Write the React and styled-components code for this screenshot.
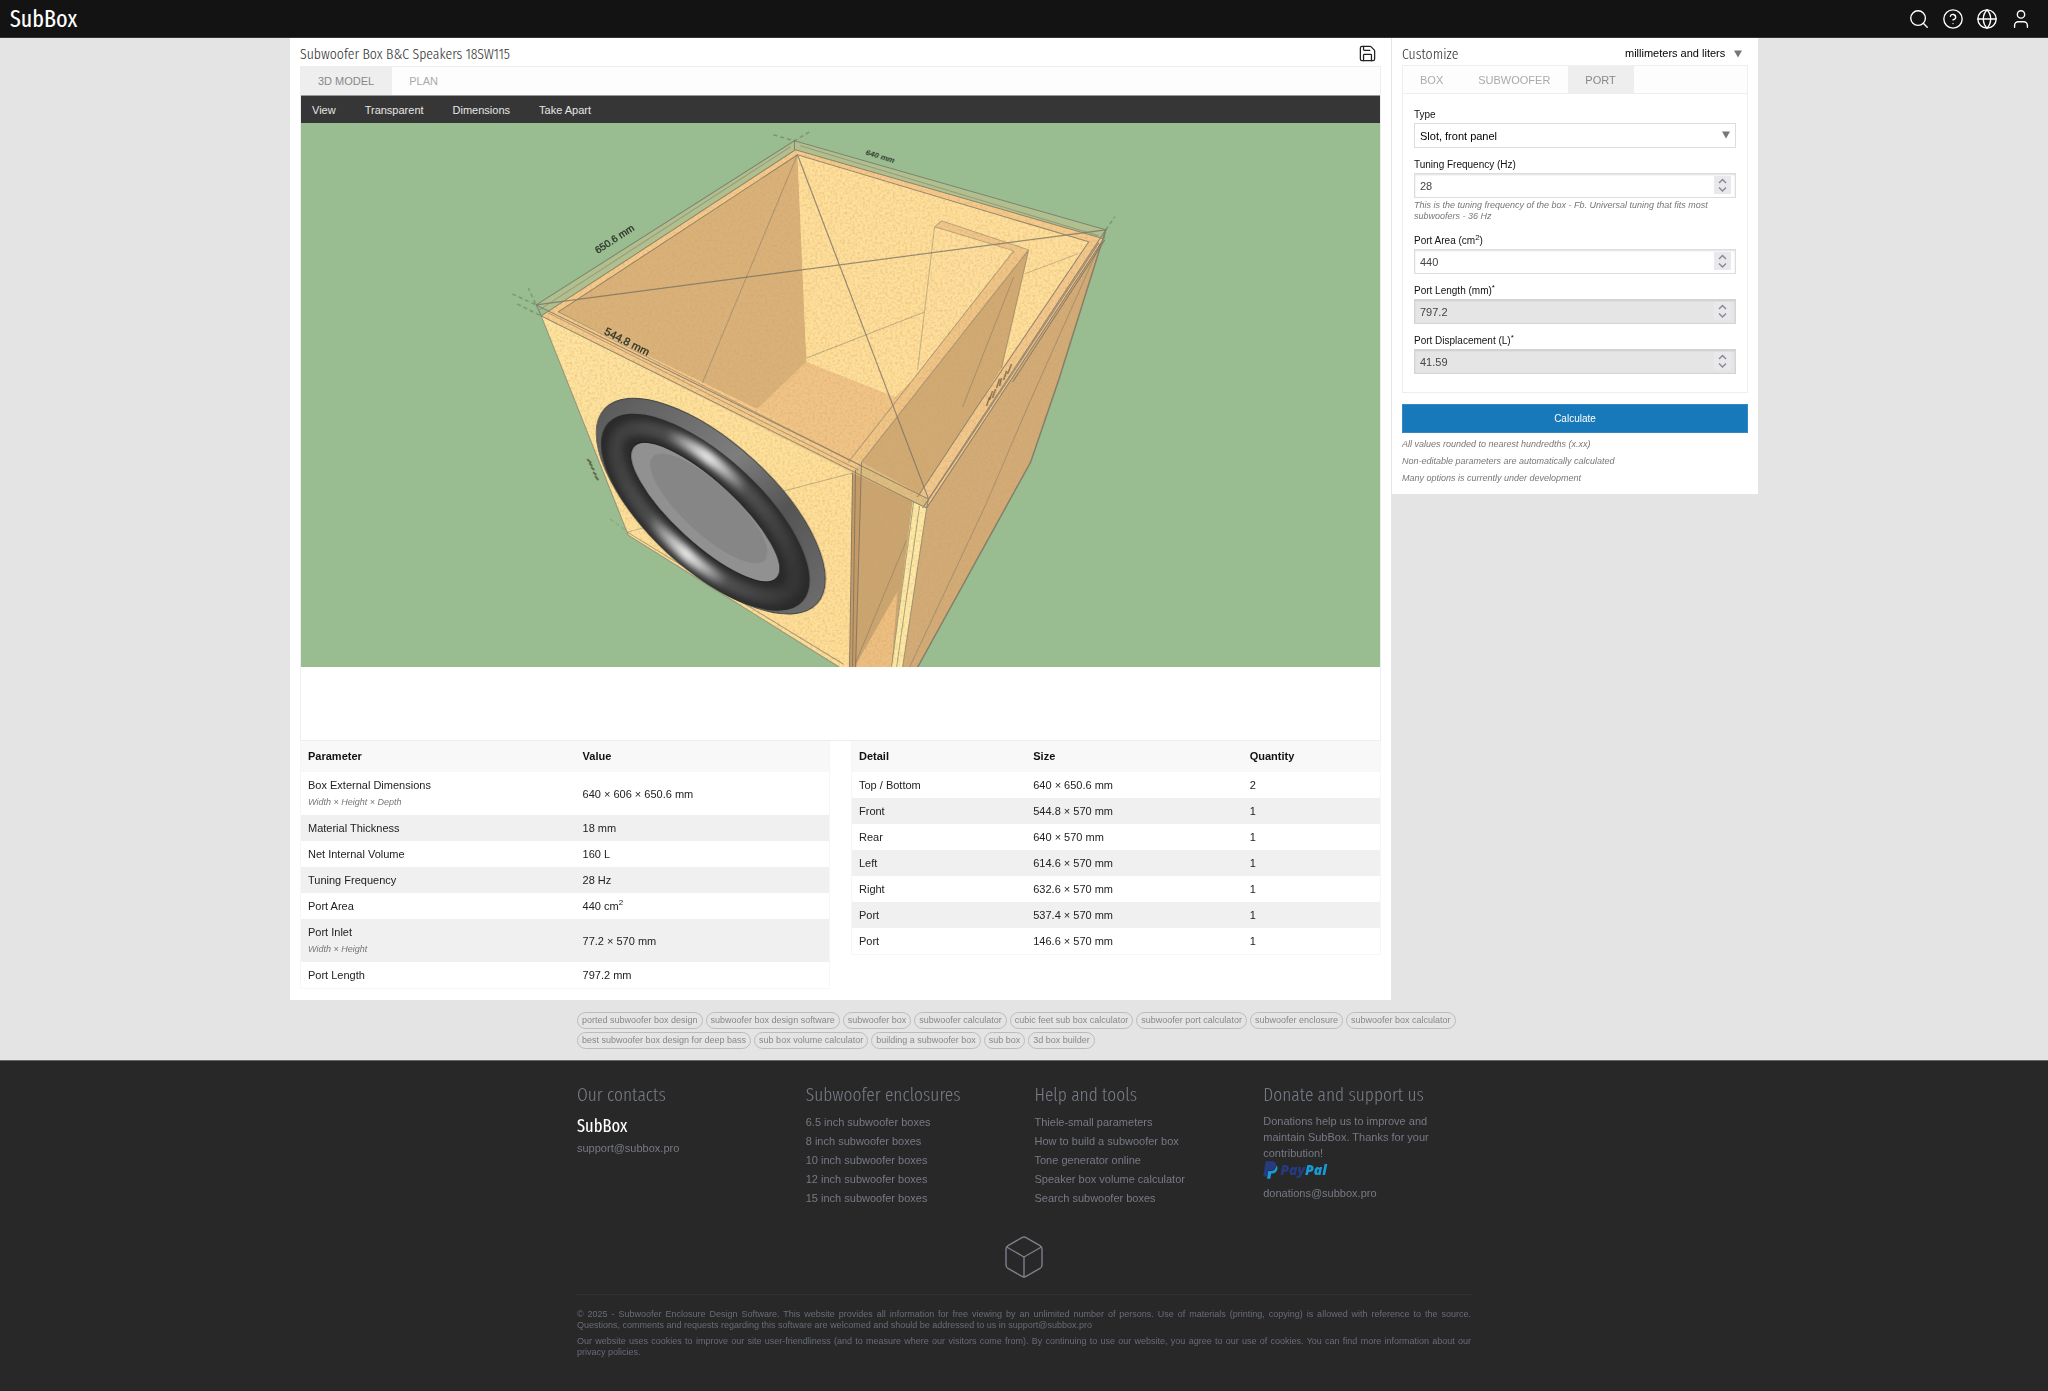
import React from 'react';

import styled, {createGlobalStyle, css} from 'styled-components';
import {Box, CircleHelp, Globe, Save, Search, User} from 'lucide-react';

const GlobalStyle = createGlobalStyle`
  * {
    box-sizing: border-box;
  }

  body {
    margin: 0;
    background: #e4e4e4;
    color: #222;
    font-family: 'Liberation Sans', Arial, sans-serif;
    font-size: 11px;
    line-height: 16px;
  }

  button,
  input,
  select {
    font-family: inherit;
    font-size: inherit;
    margin: 0;
  }

  sup {
    font-size: 8px;
    line-height: 0;
  }
`;

const condensed = css`
  font-family: 'Fira Sans Extra Condensed', 'Fira Sans Condensed', 'Open Sans Condensed', 'Roboto Condensed', Lato,
    sans-serif;
  font-weight: 300;
`;

const Page = styled.div`
  display: flex;
  flex-direction: column;
  min-height: 100vh;
`;

const Header = styled.header`
  display: flex;
  align-items: center;
  justify-content: space-between;
  height: 38px;
  padding: 0 16px 0 10px;
  background: #131313;
  border-bottom: 1px solid #333;
`;

const Logo = styled.a`
  ${condensed}
  display: block;
  color: #fff;
  font-size: ${(props) => (props.$small ? '18px' : '24px')};
  font-weight: 400;
  line-height: ${(props) => (props.$small ? '26px' : '30px')};
  text-decoration: none;
`;

const HeaderNav = styled.nav`
  display: flex;
  gap: 12px;
`;

const IconButton = styled.button`
  display: flex;
  padding: 0 ${(props) => props.$inset ?? '0'} 0 0;
  border: none;
  background: none;
  color: ${(props) => props.$color ?? '#fff'};
  cursor: pointer;
`;

const Workspace = styled.main`
  display: grid;
  grid-template-columns: 3fr 1fr;
  align-items: start;
  width: 100%;
  max-width: 1468px;
  margin: 0 auto;
`;

const Panel = styled.section`
  background: #fff;
  padding: 0 10px ${(props) => props.$bottom ?? '11px'};
`;

const SidePanel = styled(Panel)`
  border-left: 1px solid #e4e4e4;
`;

const PanelHead = styled.div`
  display: flex;
  align-items: center;
  justify-content: space-between;
  height: ${(props) => props.$height ?? '28px'};
  padding-top: 2px;
`;

const Title = styled.h1`
  ${condensed}
  margin: 2px 0 0;
  color: #333;
  font-size: 15px;
`;

const Framed = styled.div`
  border: 1px solid #eee;
`;

const Tabs = styled.div`
  display: flex;
  height: ${(props) => props.$height ?? '28px'};
  background: #fdfdfd;
  border-bottom: 1px solid ${(props) => props.$line ?? '#eee'};
`;

const Tab = styled.button`
  padding: 0 18px 0 17px;
  border: none;
  background: ${(props) => (props.$active ? '#eee' : 'transparent')};
  color: ${(props) => (props.$active ? '#888' : '#aaa')};
  text-transform: uppercase;
  cursor: pointer;
`;

const Toolbar = styled.div`
  display: flex;
  gap: 29px;
  height: 27px;
  padding: 0 11px;
  background: #363636;
`;

const ToolButton = styled.button`
  padding: 0;
  border: none;
  background: none;
  color: #e6e6e6;
  cursor: pointer;
`;

const Scene = styled.svg`
  display: block;
  width: 100%;
  height: 544px;
  background: #9abc91;
`;

const SceneFooter = styled.div`
  height: 73px;
`;

const Tables = styled.div`
  display: grid;
  grid-template-columns: 1fr 1fr;
  gap: 21px;
  align-items: start;
`;

const DataTable = styled.table`
  width: 100%;
  border: 1px solid #f6f6f6;
  border-top: none;
  border-spacing: 0;
  table-layout: fixed;

  th,
  td {
    padding: 5px 7px;
    text-align: left;
  }

  th {
    padding: 7px 7px 8px;
    background: #f8f8f8;
    color: #111;
  }

  tbody tr:nth-child(even) {
    background: #f0f0f0;
  }
`;

const Hint = styled.p`
  margin: ${(props) => props.$margin ?? '0'};
  color: #777;
  font-size: 9px;
  font-style: italic;
  line-height: ${(props) => props.$lineHeight ?? '11px'};
`;

const Form = styled.form`
  display: flex;
  flex-direction: column;
  padding: 12px 11px 10px;
`;

const FieldBlock = styled.div`
  margin-bottom: ${(props) => (props.$loose ? '10px' : '8px')};
`;

const Label = styled.label`
  display: block;
  color: #111;
  font-size: 10px;
  line-height: 17px;
`;

const Control = styled.div`
  position: relative;
  display: flex;
`;

const control = css`
  width: 100%;
  height: 25px;
  padding: 0 5px;
  border: 1px solid #ddd;
  border-radius: 0;
  background: #fff;
  outline: none;
`;

const NumberInput = styled.input`
  ${control}
  color: #444;
  box-shadow: inset 0 1px 2px #ddd;
  appearance: textfield;

  &::-webkit-inner-spin-button {
    appearance: none;
  }

  &:read-only {
    background: #e5e5e5;
    border-color: #d4d4d4;
    box-shadow: inset 0 1px 2px #ccc;
  }
`;

const Select = styled.select`
  ${control}
  appearance: none;
  color: #000;
`;

const UnitSelect = styled.select`
  appearance: none;
  padding: 0 22px 0 0;
  border: none;
  background: none;
  color: #000;
`;

const Arrow = styled.svg`
  position: absolute;
  top: ${(props) => props.$top};
  right: 6px;
  pointer-events: none;
`;

const Spinner = styled.svg`
  position: absolute;
  top: 3px;
  right: 5px;
  background: #e9e9ed;
`;

const Submit = styled.button`
  width: 100%;
  height: 29px;
  margin: 11px 0 3px;
  border: 1px solid #3488c4;
  background: #1779ba;
  color: #fff;
  font-size: 10px;
  cursor: pointer;
`;

const Narrow = styled.div`
  width: 100%;
  max-width: 894px;
  margin: 0 auto;
`;

const TagList = styled(Narrow)`
  display: flex;
  flex-wrap: wrap;
  gap: 3px;
  padding: 12px 0 11px;
`;

const Tag = styled.a`
  height: 17px;
  padding: 0 4px;
  border: 1px solid #bbb;
  border-radius: 9px;
  color: #888;
  font-size: 9px;
  line-height: 15px;
  text-decoration: none;
`;

const Footer = styled.footer`
  flex: 1;
  border-top: 1px solid #666;
  background: #282828;
  color: #777a85;
`;

const FooterColumns = styled(Narrow)`
  display: grid;
  grid-template-columns: repeat(4, 1fr);
  column-gap: 21px;
  height: 172px;
  padding-top: 20px;
`;

const FooterTitle = styled.h2`
  ${condensed}
  margin: 0 0 4px;
  font-size: 19px;
  line-height: 28px;
`;

const FooterLink = styled.a`
  display: block;
  color: inherit;
  line-height: 19px;
  text-decoration: none;
`;

const FooterText = styled.p`
  margin: 2px 0 0;
`;

const PayPalLink = styled.a`
  display: flex;
  align-items: center;
  gap: 2px;
  height: 19px;
  margin: -1px 0 5px;
  color: #253b80;
  font-family: 'Open Sans', sans-serif;
  font-size: 14px;
  font-style: italic;
  font-weight: 800;
  text-decoration: none;
`;

const PayPalAccent = styled.span`
  color: #179bd7;
`;

const FooterMark = styled.div`
  display: flex;
  justify-content: center;
  height: 62px;
  border-bottom: 1px solid #323232;
`;

const Legal = styled(Narrow)`
  padding-bottom: 30px;
  color: #696c78;
  font-size: 9px;
  line-height: 11px;
  text-align: justify;
`;

const LegalText = styled.p`
  margin: 0 0 5px;
`;

const LegalBody = styled.div`
  padding-top: 14px;
`;

const parameters = [
  {name: 'Box External Dimensions', note: 'Width × Height × Depth', value: '640 × 606 × 650.6 mm'},
  {name: 'Material Thickness', value: '18 mm'},
  {name: 'Net Internal Volume', value: '160 L'},
  {name: 'Tuning Frequency', value: '28 Hz'},
  {name: 'Port Area', value: <>440 cm<sup>2</sup></>},
  {name: 'Port Inlet', note: 'Width × Height', value: '77.2 × 570 mm'},
  {name: 'Port Length', value: '797.2 mm'},
];

const details = [
  ['Top / Bottom', '640 × 650.6 mm', 2],
  ['Front', '544.8 × 570 mm', 1],
  ['Rear', '640 × 570 mm', 1],
  ['Left', '614.6 × 570 mm', 1],
  ['Right', '632.6 × 570 mm', 1],
  ['Port', '537.4 × 570 mm', 1],
  ['Port', '146.6 × 570 mm', 1],
];

const tags = [
  'ported subwoofer box design',
  'subwoofer box design software',
  'subwoofer box',
  'subwoofer calculator',
  'cubic feet sub box calculator',
  'subwoofer port calculator',
  'subwoofer enclosure',
  'subwoofer box calculator',
  'best subwoofer box design for deep bass',
  'sub box volume calculator',
  'building a subwoofer box',
  'sub box',
  '3d box builder',
];

const enclosures = ['6.5', '8', '10', '12', '15'].map((size) => `${size} inch subwoofer boxes`);

const tools = [
  'Thiele-small parameters',
  'How to build a subwoofer box',
  'Tone generator online',
  'Speaker box volume calculator',
  'Search subwoofer boxes',
];

const DropArrow = ({top}) => (
  <Arrow $top={top} width="8" height="8" viewBox="0 0 8 8" aria-hidden="true">
    <path d="M0 0.5h8L4 7.5z" fill="#777" />
  </Arrow>
);

const NumberField = ({id, label, value, readOnly, hint}) => (
  <FieldBlock $loose={Boolean(hint)}>
    <Label htmlFor={id}>{label}</Label>
    <Control>
      <NumberInput id={id} type="number" step="any" defaultValue={value} readOnly={readOnly} />
      <Spinner width="17" height="18" viewBox="0 0 17 18" aria-hidden="true">
        <path d="M5 7l3.5-3.5L12 7M5 11.5L8.5 15 12 11.5" fill="none" stroke="#8b8b94" strokeWidth="1.5" />
      </Spinner>
    </Control>
    {hint && <Hint $margin="2px 0 0">{hint}</Hint>}
  </FieldBlock>
);

const Speaker = () => (
  <g>
    <ellipse rx="144" ry="63" transform="translate(710.5 506) rotate(42.5)" fill="url(#rim)" stroke="#444" strokeWidth="1" />
    <g transform="translate(705 512) rotate(42.6)">
      <ellipse rx="132" ry="56" fill="#2b2b2b" />
      <ellipse rx="115" ry="44" fill="none" stroke="url(#roll)" strokeWidth="15" filter="url(#soft)" />
      <ellipse rx="116" ry="44" fill="none" stroke="url(#glow)" strokeWidth="7" filter="url(#soft)" />
      <ellipse rx="97" ry="31" fill="#919191" stroke="#222" strokeWidth="1" />
      <ellipse cx="0" cy="-5" rx="76" ry="25" fill="#868686" />
    </g>
  </g>
);

const BoxScene = () => (
  <Scene viewBox="301 123 1078 544" preserveAspectRatio="xMidYMid slice" role="img" aria-label="3D model">
    <defs>
      <filter id="grain" x="0" y="0" width="100%" height="100%">
        <feTurbulence type="fractalNoise" baseFrequency="0.4" numOctaves="3" seed="4" />
        <feColorMatrix values="0 0 0 0 0.56  0 0 0 0 0.34  0 0 0 0 0.14  0.9 0 0 0 -0.36" />
        <feComposite in2="SourceGraphic" operator="in" result="noise" />
        <feMerge>
          <feMergeNode in="SourceGraphic" />
          <feMergeNode in="noise" />
        </feMerge>
      </filter>
      <filter id="soft" x="-20%" y="-40%" width="140%" height="180%">
        <feGaussianBlur stdDeviation="3" />
      </filter>
      <linearGradient id="front" x1="0" y1="0" x2="1" y2="1">
        <stop offset="0" stopColor="#ffe49f" />
        <stop offset="1" stopColor="#ffde96" />
      </linearGradient>
      <linearGradient id="rim" x1="0" y1="0" x2="1" y2="0">
        <stop offset="0" stopColor="#5c5c5c" />
        <stop offset="0.45" stopColor="#7e7e7e" />
        <stop offset="0.7" stopColor="#555" />
        <stop offset="1" stopColor="#6c6c6c" />
      </linearGradient>
      <linearGradient id="roll" gradientUnits="userSpaceOnUse" x1="-105" y1="58" x2="85" y2="-54">
        <stop offset="0" stopColor="#3a3a3a" />
        <stop offset="0.3" stopColor="#4c4c4c" />
        <stop offset="0.5" stopColor="#aaa" />
        <stop offset="0.7" stopColor="#505050" />
        <stop offset="1" stopColor="#353535" />
      </linearGradient>
      <linearGradient id="glow" gradientUnits="userSpaceOnUse" x1="-105" y1="58" x2="85" y2="-54">
        <stop offset="0.3" stopColor="#fff" stopOpacity="0" />
        <stop offset="0.5" stopColor="#fff" stopOpacity="0.9" />
        <stop offset="0.7" stopColor="#fff" stopOpacity="0" />
      </linearGradient>
    </defs>

    {/* see-through top sheet over the background */}
    <path d="M794 141L1105 230 1103 240 928 499 536 305z" fill="#b0bf8d" />

    <g filter="url(#grain)">
      <path d="M795 150L1103 239 926 508 852 473 541 316z" fill="#f6ca8a" />
      <path d="M797 155L806 362 757 409 558 312z" fill="#dab279" />
      <path d="M797 155L1088 242 1001 368 894 397 806 362z" fill="#ffdf9a" />
      <path d="M806 362L894 397 912 380 848 462 757 409z" fill="#f1c486" />
      <path d="M934 227L1013 251 912 380 917 370z" fill="#ffdf9b" />
      <path d="M934 227L941 221 1028 250 1013 251z" fill="#f1c68a" />
      <path d="M1028 250L1001 368 975 409 917 497 861 462z" fill="#d1aa73" />
      <path d="M1013 251L1028 250 861 462 848 462z" fill="#f0c586" />
      <path d="M1088 242L1103 239 926 508 917 497 975 409z" fill="#f3c88c" />
      <path d="M1103 239L1105 232 1058 380 1030 462 917 667 902 667 926 508z" fill="#d2ab77" />
      <path d="M861 462L917 497 912 502 891 667 852 667z" fill="#cba56f" />
      <path d="M897 591L891 667 854 667z" fill="#edbf80" />
      <path d="M912 502L926 508 902 667 891 667z" fill="#ffeaa5" />
      <path d="M541 316L852 473 849 667 839 667 628 535z" fill="url(#front)" />
      <path d="M852 473L861 464 856 667 849 667z" fill="#c69a66" />
      <path d="M852 473L861 462 928 499 926 508z" fill="#dfbd80" />
    </g>

    <g fill="none" stroke="#6e6a60" strokeWidth="1" opacity="0.7">
      <path d="M536 305L794 141 1105 230 928 499z" />
      <path d="M541 316L795 150 1103 239 926 508z" />
      <path d="M539 310L790 147M800 146L1098 236" opacity="0.6" />
      <path d="M558 312L797 155 1088 242 975 409 917 497" />
      <path d="M536 305L541 316M794 141V150M1105 230L1103 239M928 499L926 508" />
      <path d="M558 312L861 466M548 313L858 470" opacity="0.7" />
      <path d="M536 305L1105 230M797 155L928 499" strokeWidth="1.2" />
      <path d="M934 227L941 221 1028 250M934 227L1013 251" opacity="0.6" />
      <path d="M1013 251L848 462M1028 250L861 462M1028 250L1001 368" opacity="0.7" />
      <path d="M1098 243L960 452 922 508M1104 240L1012 382" />
      <path d="M1105 230L1058 380 1030 462 917 667" strokeWidth="1.5" />
      <path d="M926 508L902 667M913 502L891 667M919 506L896 667" opacity="0.8" />
      <path d="M852 473L849 667M855 470L852 667M861 462L855 667" />
      <path d="M541 316L628 535 839 667M627 532L843 664" opacity="0.8" />
    </g>

    <g fill="none" stroke="#6e6a60" strokeWidth="1" opacity="0.4">
      <path d="M797 155L702 383M806 358L924 312M934 227L917 370M1024 274L1077 254" />
      <path d="M1013 277L962 407M1100 243L1026 409 984 507 909 667M906 540L855 663" />
      <path d="M852 473L627 532" />
    </g>

    <g fill="none" stroke="#4c5c48" strokeWidth="1" strokeDasharray="4 3" opacity="0.6">
      <path d="M773 135L794 141 809 132M512 294L536 305 528 288M517 304L541 316M1105 230L1114 217" />
      <path d="M610 519L628 532" opacity="0.4" />
    </g>

    <Speaker />

    <g fill="#2b3328" textAnchor="middle">
      <text fontSize="8" fontStyle="italic" fontWeight="700" transform="translate(879 159) rotate(17)">640 mm</text>
      <text fontSize="10" transform="translate(616 242) rotate(-33)" stroke="#2b3328" strokeWidth="0.3">650.6 mm</text>
      <text fontSize="11" transform="translate(625 345) rotate(27)" stroke="#2b3328" strokeWidth="0.3">544.8 mm</text>
    </g>
    <g fill="none" stroke="#3a3326" opacity="0.65">
      <path d="M986 406l3-9M989 400l3-9M992 398l3-9M996 388l3-9M999 386l2-8M1003 380l3-9M1007 374l4-10" strokeWidth="1.3" />
      <path d="M587 459l4 4M589 463l3 3M591 467l3 3M593 472l3 3M595 476l3 4" strokeWidth="1.8" />
    </g>
  </Scene>
);

const PayPalMark = () => (
  <svg width="15" height="18" viewBox="0 0 15 18" aria-hidden="true">
    <path d="M2.6 0.3h6.2c3 0 4.700 1.600 4.200 4.300-.6 3.200-2.800 4.700-6 4.700H5.200L4.100 15.500H0.300z" fill="#253b80" />
    <path d="M13.400 4.400c1 .9 1.300 2.200.9 3.900-.7 2.900-2.500 4.200-5.300 4.200H8.200l-.9 5.200H4l1.300-7.700h2.400c3.100 0 5-1.900 5.700-5.600z" fill="#179bd7" />
  </svg>
);

const App = () => (
  <Page>
    <GlobalStyle />
    <Header>
      <Logo href="#">SubBox</Logo>
      <HeaderNav>
        <IconButton aria-label="Search"><Search size={22} strokeWidth={1.5} /></IconButton>
        <IconButton aria-label="Help"><CircleHelp size={22} strokeWidth={1.5} /></IconButton>
        <IconButton aria-label="Language"><Globe size={22} strokeWidth={1.5} /></IconButton>
        <IconButton aria-label="Account"><User size={22} strokeWidth={1.5} /></IconButton>
      </HeaderNav>
    </Header>

    <Workspace>
      <Panel>
        <PanelHead>
          <Title>Subwoofer Box B&amp;C Speakers 18SW115</Title>
          <IconButton $color="#222" $inset="4px" aria-label="Save"><Save size={19} strokeWidth={1.6} /></IconButton>
        </PanelHead>
        <Framed>
          <Tabs $line="#999" $height="29px">
            <Tab $active>3D Model</Tab>
            <Tab>Plan</Tab>
          </Tabs>
          <Toolbar>
            {['View', 'Transparent', 'Dimensions', 'Take Apart'].map((item) => (
              <ToolButton key={item}>{item}</ToolButton>
            ))}
          </Toolbar>
          <BoxScene />
          <SceneFooter />
        </Framed>
        <Tables>
          <DataTable>
            <colgroup>
              <col width="52%" />
              <col />
            </colgroup>
            <thead>
              <tr>
                <th>Parameter</th>
                <th>Value</th>
              </tr>
            </thead>
            <tbody>
              {parameters.map((row) => (
                <tr key={row.name}>
                  <td>
                    {row.name}
                    {row.note && <Hint $margin="2px 0 0" $lineHeight="15px">{row.note}</Hint>}
                  </td>
                  <td>{row.value}</td>
                </tr>
              ))}
            </tbody>
          </DataTable>
          <DataTable>
            <colgroup>
              <col width="33%" />
              <col width="41%" />
              <col />
            </colgroup>
            <thead>
              <tr>
                <th>Detail</th>
                <th>Size</th>
                <th>Quantity</th>
              </tr>
            </thead>
            <tbody>
              {details.map(([name, size, quantity]) => (
                <tr key={size}>
                  <td>{name}</td>
                  <td>{size}</td>
                  <td>{quantity}</td>
                </tr>
              ))}
            </tbody>
          </DataTable>
        </Tables>
      </Panel>

      <SidePanel $bottom="7px">
        <PanelHead $height="27px">
          <Title as="h2">Customize</Title>
          <Control>
            <UnitSelect aria-label="Units" defaultValue="mm">
              <option value="mm">millimeters and liters</option>
            </UnitSelect>
            <DropArrow top="3px" />
          </Control>
        </PanelHead>
        <Framed>
          <Tabs>
            <Tab>Box</Tab>
            <Tab>Subwoofer</Tab>
            <Tab $active>Port</Tab>
          </Tabs>
          <Form>
            <FieldBlock>
              <Label htmlFor="type">Type</Label>
              <Control>
                <Select id="type" defaultValue="slot">
                  <option value="slot">Slot, front panel</option>
                </Select>
                <DropArrow top="8px" />
              </Control>
            </FieldBlock>
            <NumberField
              id="tuning"
              label="Tuning Frequency (Hz)"
              value="28"
              hint="This is the tuning frequency of the box - Fb. Universal tuning that fits most subwoofers - 36 Hz"
            />
            <NumberField id="area" label={<>Port Area (cm<sup>2</sup>)</>} value="440" />
            <NumberField id="length" label={<>Port Length (mm)<sup>*</sup></>} value="797.2" readOnly />
            <NumberField id="displacement" label={<>Port Displacement (L)<sup>*</sup></>} value="41.59" readOnly />
          </Form>
        </Framed>
        <Submit type="button">Calculate</Submit>
        <Hint $lineHeight="17px">All values rounded to nearest hundredths (x.xx)</Hint>
        <Hint $lineHeight="17px">Non-editable parameters are automatically calculated</Hint>
        <Hint $lineHeight="17px">Many options is currently under development</Hint>
      </SidePanel>
    </Workspace>

    <TagList>
      {tags.map((tag) => (
        <Tag key={tag} href="#">{tag}</Tag>
      ))}
    </TagList>

    <Footer>
      <FooterColumns>
        <div>
          <FooterTitle>Our contacts</FooterTitle>
          <Logo $small href="#">SubBox</Logo>
          <FooterLink href="#">support@subbox.pro</FooterLink>
        </div>
        <div>
          <FooterTitle>Subwoofer enclosures</FooterTitle>
          {enclosures.map((item) => (
            <FooterLink key={item} href="#">{item}</FooterLink>
          ))}
        </div>
        <div>
          <FooterTitle>Help and tools</FooterTitle>
          {tools.map((item) => (
            <FooterLink key={item} href="#">{item}</FooterLink>
          ))}
        </div>
        <div>
          <FooterTitle>Donate and support us</FooterTitle>
          <FooterText>
            Donations help us to improve and maintain SubBox. Thanks for your contribution!
          </FooterText>
          <PayPalLink href="#">
            <PayPalMark />
            <span>Pay<PayPalAccent>Pal</PayPalAccent></span>
          </PayPalLink>
          <FooterLink href="#">donations@subbox.pro</FooterLink>
        </div>
      </FooterColumns>
      <Legal>
        <FooterMark>
          <Box size={48} strokeWidth={0.7} color="#7c7f8c" />
        </FooterMark>
        <LegalBody>
          <LegalText>
            © 2025 - Subwoofer Enclosure Design Software. This website provides all information for free viewing by an
            unlimited number of persons. Use of materials (printing, copying) is allowed with reference to the source.
            Questions,&nbsp;comments and requests regarding this software are welcomed and should be addressed to us in
            support@subbox.pro
          </LegalText>
          <LegalText>
            Our website uses cookies to improve our site user-friendliness (and to measure where our visitors come
            from). By continuing to use our website, you agree to our use of cookies. You can find more information
            about our privacy policies.
          </LegalText>
        </LegalBody>
      </Legal>
    </Footer>
  </Page>
);

export default App;
